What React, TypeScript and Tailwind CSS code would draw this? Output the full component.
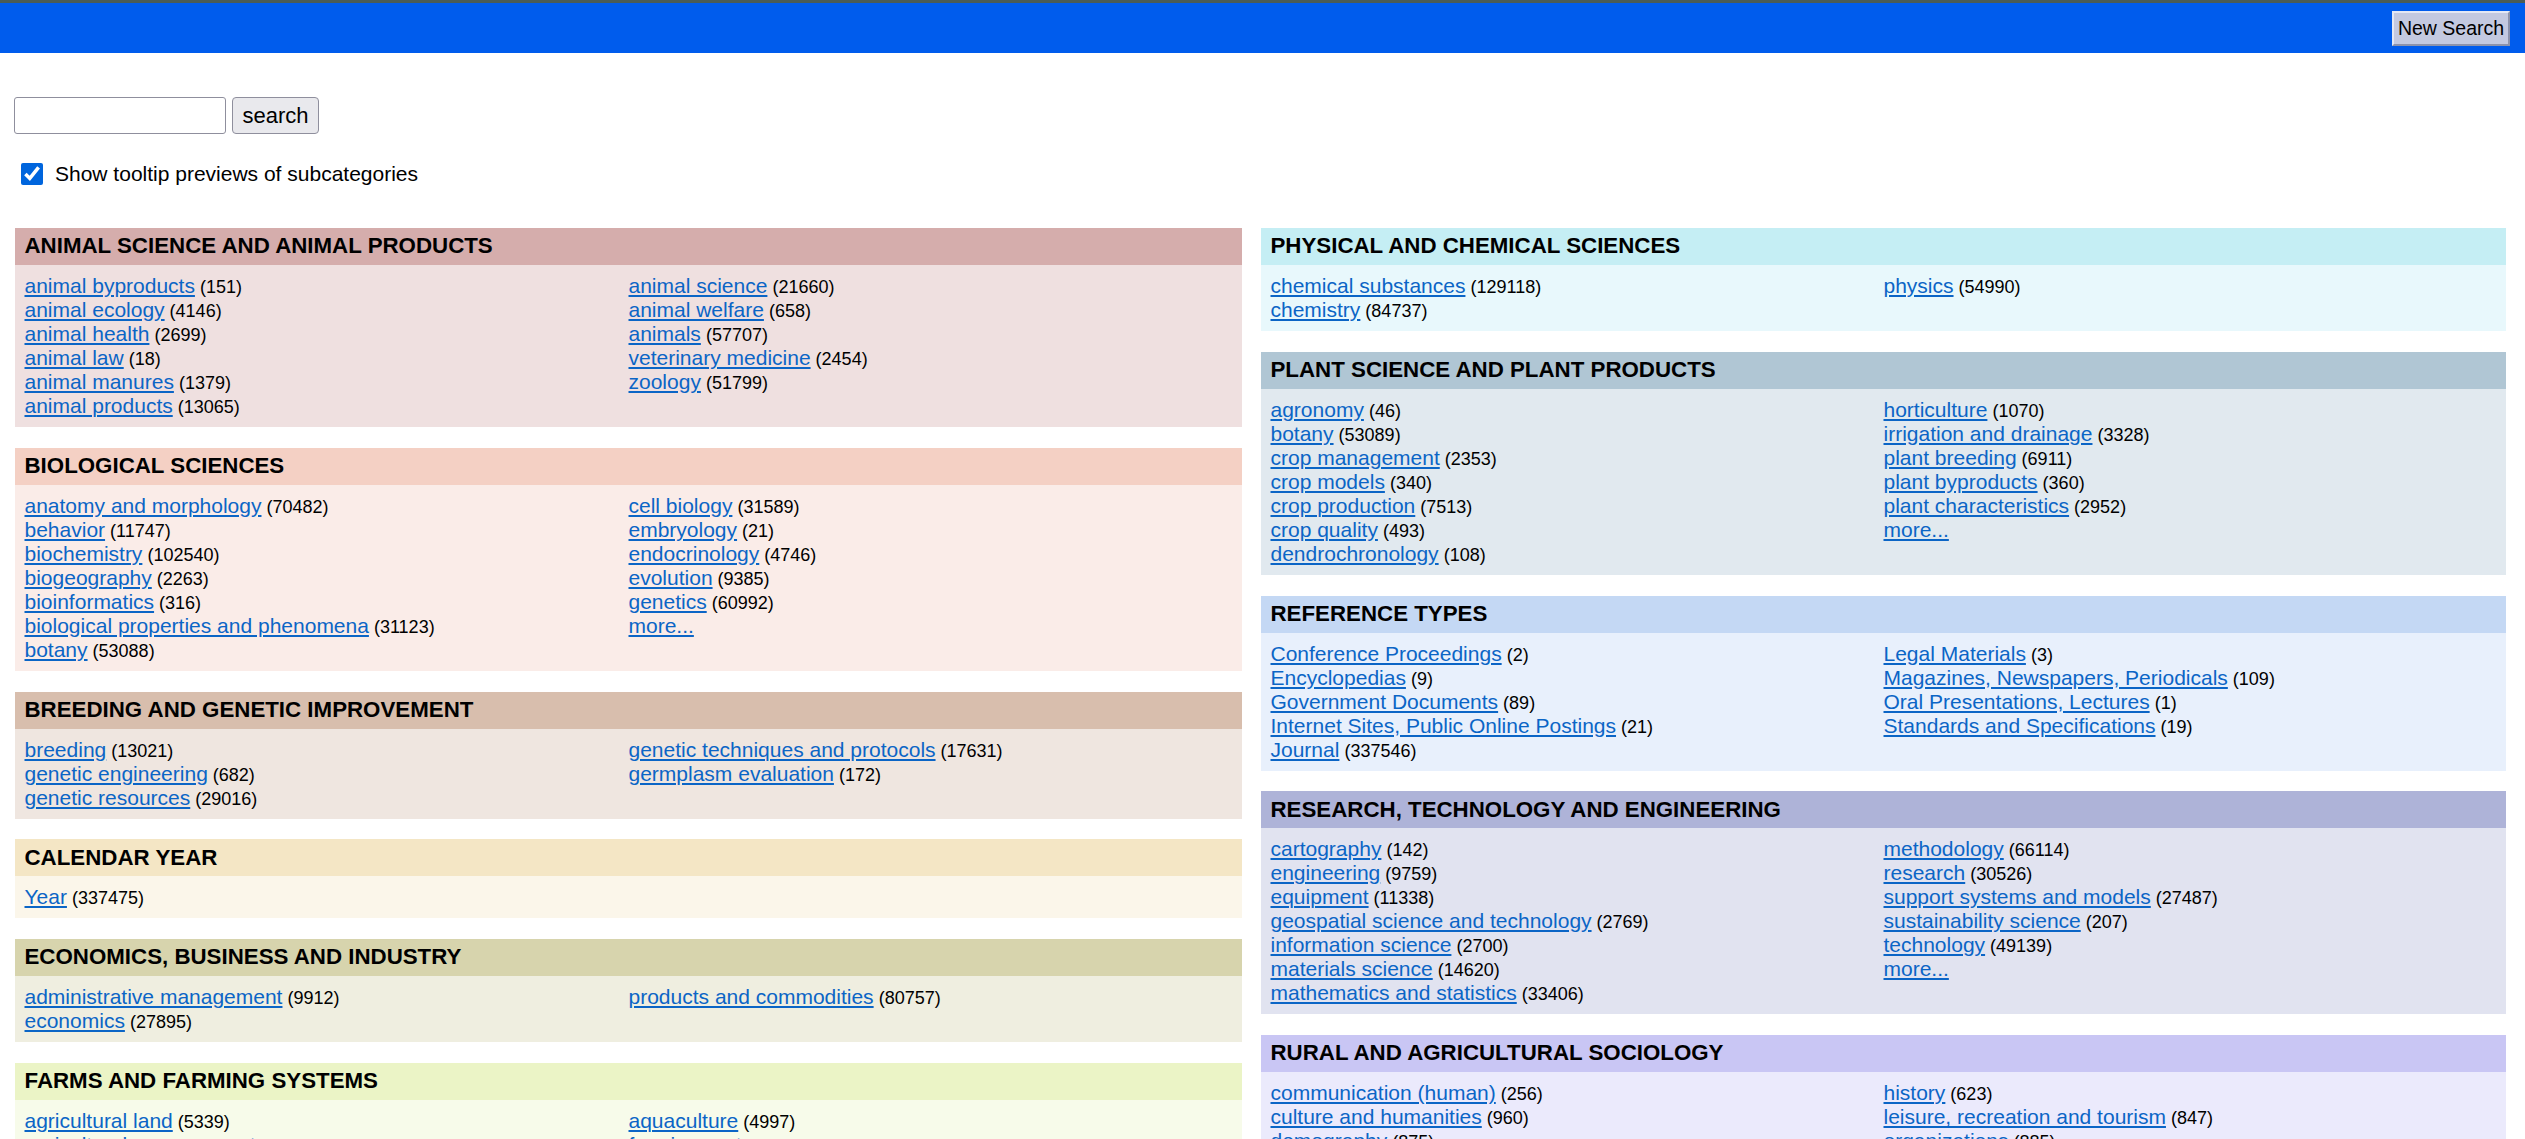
import React from "react";

type Item = [string, string | null];
type Panel = {
  title: string;
  head: string;
  body: string;
  left: Item[];
  right: Item[];
};

const leftPanels: Panel[] = [
  {
    title: "ANIMAL SCIENCE AND ANIMAL PRODUCTS",
    head: "bg-[#d5adac]",
    body: "bg-[#efe0e0]",
    left: [
      ["animal byproducts", "151"],
      ["animal ecology", "4146"],
      ["animal health", "2699"],
      ["animal law", "18"],
      ["animal manures", "1379"],
      ["animal products", "13065"],
    ],
    right: [
      ["animal science", "21660"],
      ["animal welfare", "658"],
      ["animals", "57707"],
      ["veterinary medicine", "2454"],
      ["zoology", "51799"],
    ],
  },
  {
    title: "BIOLOGICAL SCIENCES",
    head: "bg-[#f4d0c4]",
    body: "bg-[#faece8]",
    left: [
      ["anatomy and morphology", "70482"],
      ["behavior", "11747"],
      ["biochemistry", "102540"],
      ["biogeography", "2263"],
      ["bioinformatics", "316"],
      ["biological properties and phenomena", "31123"],
      ["botany", "53088"],
    ],
    right: [
      ["cell biology", "31589"],
      ["embryology", "21"],
      ["endocrinology", "4746"],
      ["evolution", "9385"],
      ["genetics", "60992"],
      ["more...", null],
    ],
  },
  {
    title: "BREEDING AND GENETIC IMPROVEMENT",
    head: "bg-[#d8bead]",
    body: "bg-[#efe6e0]",
    left: [
      ["breeding", "13021"],
      ["genetic engineering", "682"],
      ["genetic resources", "29016"],
    ],
    right: [
      ["genetic techniques and protocols", "17631"],
      ["germplasm evaluation", "172"],
    ],
  },
  {
    title: "CALENDAR YEAR",
    head: "bg-[#f4e6c5]",
    body: "bg-[#fbf6ea]",
    left: [["Year", "337475"]],
    right: [],
  },
  {
    title: "ECONOMICS, BUSINESS AND INDUSTRY",
    head: "bg-[#d7d4ad]",
    body: "bg-[#efeee0]",
    left: [
      ["administrative management", "9912"],
      ["economics", "27895"],
    ],
    right: [["products and commodities", "80757"]],
  },
  {
    title: "FARMS AND FARMING SYSTEMS",
    head: "bg-[#ebf4c6]",
    body: "bg-[#f7fbea]",
    left: [
      ["agricultural land", "5339"],
      ["agricultural management", "9969"],
      ["farms", "12318"],
    ],
    right: [
      ["aquaculture", "4997"],
      ["farming systems", "9185"],
    ],
  },
];

const rightPanels: Panel[] = [
  {
    title: "PHYSICAL AND CHEMICAL SCIENCES",
    head: "bg-[#c5eef4]",
    body: "bg-[#e8f8fc]",
    left: [
      ["chemical substances", "129118"],
      ["chemistry", "84737"],
    ],
    right: [["physics", "54990"]],
  },
  {
    title: "PLANT SCIENCE AND PLANT PRODUCTS",
    head: "bg-[#b0c6d4]",
    body: "bg-[#e1e9ef]",
    left: [
      ["agronomy", "46"],
      ["botany", "53089"],
      ["crop management", "2353"],
      ["crop models", "340"],
      ["crop production", "7513"],
      ["crop quality", "493"],
      ["dendrochronology", "108"],
    ],
    right: [
      ["horticulture", "1070"],
      ["irrigation and drainage", "3328"],
      ["plant breeding", "6911"],
      ["plant byproducts", "360"],
      ["plant characteristics", "2952"],
      ["more...", null],
    ],
  },
  {
    title: "REFERENCE TYPES",
    head: "bg-[#c4d8f4]",
    body: "bg-[#e8f0fc]",
    left: [
      ["Conference Proceedings", "2"],
      ["Encyclopedias", "9"],
      ["Government Documents", "89"],
      ["Internet Sites, Public Online Postings", "21"],
      ["Journal", "337546"],
    ],
    right: [
      ["Legal Materials", "3"],
      ["Magazines, Newspapers, Periodicals", "109"],
      ["Oral Presentations, Lectures", "1"],
      ["Standards and Specifications", "19"],
    ],
  },
  {
    title: "RESEARCH, TECHNOLOGY AND ENGINEERING",
    head: "bg-[#aeb3d8]",
    body: "bg-[#e1e3f0]",
    left: [
      ["cartography", "142"],
      ["engineering", "9759"],
      ["equipment", "11338"],
      ["geospatial science and technology", "2769"],
      ["information science", "2700"],
      ["materials science", "14620"],
      ["mathematics and statistics", "33406"],
    ],
    right: [
      ["methodology", "66114"],
      ["research", "30526"],
      ["support systems and models", "27487"],
      ["sustainability science", "207"],
      ["technology", "49139"],
      ["more...", null],
    ],
  },
  {
    title: "RURAL AND AGRICULTURAL SOCIOLOGY",
    head: "bg-[#c9c6f4]",
    body: "bg-[#ebeafc]",
    left: [
      ["communication (human)", "256"],
      ["culture and humanities", "960"],
      ["demography", "875"],
    ],
    right: [
      ["history", "623"],
      ["leisure, recreation and tourism", "847"],
      ["organizations", "885"],
    ],
  },
];

function Row({ item }: { item: Item }) {
  return (
    <div className="leading-[24px] h-[24px] whitespace-nowrap">
      <a
        href="#"
        className="text-[21px] text-[#0b65c6] underline decoration-[2px] underline-offset-[2px]"
      >
        {item[0]}
      </a>
      {item[1] !== null && (
        <span className="text-[18px] text-black"> ({item[1]})</span>
      )}
    </div>
  );
}

function CategoryPanel({ p }: { p: Panel }) {
  return (
    <div className="mb-[20.8px]">
      <div
        className={`${p.head} h-[37px] flex items-center pl-[9.5px] pb-[1px] text-[22.3px] font-bold text-black`}
      >
        {p.title}
      </div>
      <div className={`${p.body} grid grid-cols-2 px-[9.5px] py-[9px]`}>
        <div>
          {p.left.map((it, i) => (
            <Row key={i} item={it} />
          ))}
        </div>
        <div>
          {p.right.map((it, i) => (
            <Row key={i} item={it} />
          ))}
        </div>
      </div>
    </div>
  );
}

export default function App() {
  return (
    <div className="font-['Liberation_Sans',Arial,sans-serif] bg-white min-h-screen text-black">
      <div className="h-[3px] bg-[#4a5c56]" />
      <div className="h-[50px] bg-[#005ced] flex justify-end items-start pt-[8px] pr-[15px]">
        <button className="w-[118px] h-[35px] bg-[#c3c9e0] text-[19.5px] text-black border-2 border-t-[#e4e8f4] border-l-[#e4e8f4] border-r-[#8d93ab] border-b-[#8d93ab] leading-none">
          New Search
        </button>
      </div>
      <div className="pl-[14px] pt-[44px]">
        <div className="flex items-center gap-[6px]">
          <input
            type="text"
            className="w-[212px] h-[37px] border border-[#8f8f9d] rounded-[3px] bg-white px-2 text-[21px]"
          />
          <button className="w-[87px] h-[37px] bg-[#e9e9ed] border border-[#8f8f9d] rounded-[4px] text-[22px] leading-none text-black">
            search
          </button>
        </div>
        <label className="flex items-center mt-[28px] pl-[7px] gap-[12px] text-[21px] leading-[24px]">
          <input
            type="checkbox"
            defaultChecked
            className="w-[22px] h-[22px] m-0 accent-[#0065dd]"
          />
          <span>Show tooltip previews of subcategories</span>
        </label>
      </div>
      <div className="flex gap-[19px] pl-[15px] mt-[42px]">
        <div className="w-[1227px] shrink-0">
          {leftPanels.map((p, i) => (
            <CategoryPanel key={i} p={p} />
          ))}
        </div>
        <div className="w-[1245px] shrink-0">
          {rightPanels.map((p, i) => (
            <CategoryPanel key={i} p={p} />
          ))}
        </div>
      </div>
    </div>
  );
}
